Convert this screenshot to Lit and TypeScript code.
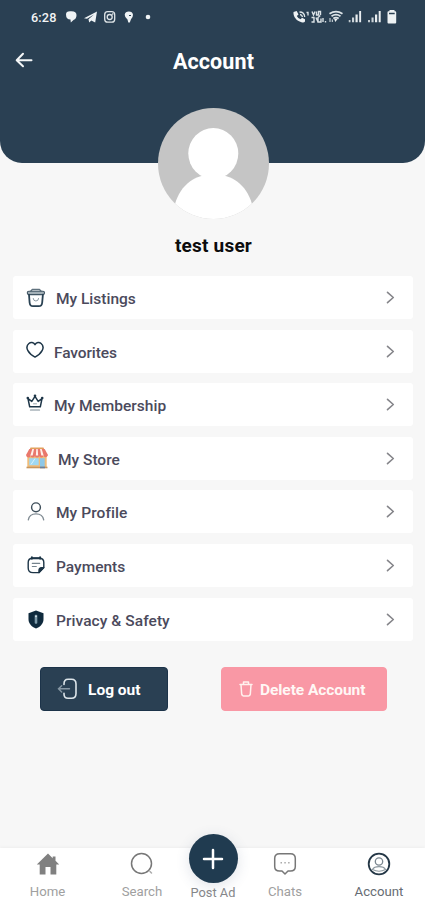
import { LitElement, html, svg, css } from "lit";
import { customElement } from "lit/decorators.js";

const NAVY = "#2a4053";
const INK = "#1d3547";

const icons = {
  listings: svg`<svg width="20" height="20" viewBox="0 0 20 20" fill="none" stroke="#2a4253" stroke-width="1.3" stroke-linecap="round" stroke-linejoin="round">
    <path d="M4.500 3.500 6.300 1.500H13.500L15.300 3.500" stroke="#60727e"/><rect x="1.300" y="3.200" width="17.200" height="3.400" rx="1.500" fill="#a3b0b7" stroke="#405563" stroke-width="1.100"/>
    <path d="M3 6.600 3.600 14.500Q3.900 18.200 7 18.200H12.800Q15.900 18.200 16.200 14.500L16.900 6.600" stroke-width="1.800"/>
    <path d="M7.200 10.500Q7.400 13 9.900 13T12.600 10.500" stroke="#8c9aa3" stroke-width="1"/></svg>`,
  heart: svg`<svg width="18" height="18" viewBox="0 0 18 18" fill="none" stroke="${INK}" stroke-width="1.500" stroke-linejoin="round">
    <path d="M9 3.700C7.500 1.200 4.700 1 2.900 2.500C.8 4.300.5 7.200 1.900 9.700C3.400 12.500 7 15.100 9 16.100C11 15.100 14.600 12.500 16.100 9.700C17.500 7.200 17.200 4.300 15.100 2.500C13.300 1 10.500 1.200 9 3.700Z"/></svg>`,
  crown: svg`<svg width="18" height="18" viewBox="0 0 18 18" fill="none" stroke="${INK}" stroke-width="1.500" stroke-linejoin="round" stroke-linecap="round">
    <path d="M3.700 12.800 2 4.700 5.800 7.400 9 2.400 12.200 7.400 16 4.700 14.300 12.800Z"/><path d="M4.500 16H13.500" stroke="#7d8b95" stroke-width="1.200"/>
    <path d="M7.500 9.800H10.500" stroke="#9aa5ad" stroke-width="1"/><g fill="${INK}" stroke="none"><circle cx="1.800" cy="4" r="1.300"/><circle cx="9" cy="1.700" r="1.300"/><circle cx="16.200" cy="4" r="1.300"/></g></svg>`,
  store: svg`<svg width="22" height="22" viewBox="0 0 22 22">
    <rect x="4" y=".5" width="14" height="4" rx="1" fill="#e2a05c"/><rect x="1.300" y="8" width="19.400" height="12.500" fill="#f0bd7b"/>
    <path d="M3.300 2H18.700L21.700 7.500V9H.300V7.500Z" fill="#e9786c"/>
    <path d="M6.300 2H8L6.600 9H4.200ZM10.300 2H11.700L12.200 9H9.800ZM14 2H15.700L17.800 9H15.400Z" fill="#fff1ea"/>
    <path d="M.300 8.500a2.150 2.100 0 0 0 4.300 0 2.150 2.100 0 0 0 4.300 0 2.150 2.100 0 0 0 4.300 0 2.150 2.100 0 0 0 4.300 0 2.150 2.100 0 0 0 4.200 0Z" fill="#e9786c"/>
    <rect x="3.200" y="11.200" width="9.500" height="7" fill="#9fd8f2"/><rect x="14" y="11.200" width="4.700" height="9" fill="#8ec8e8"/>
    <path d="M5 17.500 9 11.500" stroke="#d9f2fc"/><path d="M.5 20.500H21.500" stroke="#c9965e" stroke-width="1.600"/><path d="M14 20.500H19" stroke="#6b7f9c" stroke-width="1.600"/></svg>`,
  profile: svg`<svg width="18" height="19" viewBox="0 0 18 19" fill="none" stroke-linecap="round">
    <circle cx="9" cy="5.300" r="4.400" stroke="#3d4d59" stroke-width="1.400"/><path d="M1.300 17.800C2 13.800 5 11.800 9 11.800S16 13.800 16.700 17.800" stroke="#7f8a92" stroke-width="1.300"/></svg>`,
  payments: svg`<svg width="18" height="18" viewBox="0 0 18 18" fill="none" stroke="${INK}" stroke-width="1.400" stroke-linecap="round" stroke-linejoin="round">
    <path d="M12 16.600H6Q1.200 16.600 1.200 12V6.500Q1.200 2.200 5.500 2.200H12.500Q16.800 2.200 16.800 6.500V11.500Z"/><path d="M12 16.600V14.500Q12 11.600 14.500 11.600H16.800Z" fill="${INK}"/>
    <path d="M4.900 1.200V2.800M13.100 1.200V2.800M5 2.200H13" stroke-width="1.900"/><path d="M5.300 7.400H12.700M5.300 10.500H9.300" stroke="#75838d" stroke-width="1.100"/></svg>`,
  shield: svg`<svg width="16" height="19" viewBox="0 0 16 19"><path d="M8 .5 15.500 3.300V9C15.500 13.500 12.500 16.700 8 18.500C3.500 16.700.5 13.500.5 9V3.300Z" fill="#0f2a3d"/>
    <rect x="6.700" y="4.800" width="2.600" height="9" rx="1" fill="#7d9aa9"/><circle cx="8" cy="6.300" r=".9" fill="#dbe5ea"/></svg>`,
};

const rows = [
  { icon: icons.listings, label: "My Listings", cls: "listings" },
  { icon: icons.heart, label: "Favorites", cls: "favorites" },
  { icon: icons.crown, label: "My Membership", cls: "membership" },
  { icon: icons.store, label: "My Store", cls: "store" },
  { icon: icons.profile, label: "My Profile", cls: "profile" },
  { icon: icons.payments, label: "Payments", cls: "payments" },
  { icon: icons.shield, label: "Privacy & Safety", cls: "privacy" },
];

const signal = svg`<svg width="13" height="12" viewBox="0 0 13 12" fill="#e8edf0"><rect y="9.500" width="2" height="2.500" opacity=".8"/><rect x="3.500" y="7" width="2.100" height="5" opacity=".85"/><rect x="7" y="4" width="2.200" height="8"/><rect x="10.700" y=".5" width="2" height="11.500"/></svg>`;

@customElement("app-root")
export class AppRoot extends LitElement {
  static styles = css`
    :host { display: flex; flex-direction: column; height: 900px; width: 425px; background: #f7f7f7; font-family: Roboto, "Liberation Sans", sans-serif; overflow: hidden; }
    * { box-sizing: border-box; }
    svg { display: block; flex: none; }
    .header { height: 163px; background: #2a4053; border-radius: 0 0 22px 22px; flex: none; color: #fff; }
    .status { height: 34px; display: flex; align-items: center; padding: 0 28px 0 31px; justify-content: space-between; }
    .left, .right { display: flex; align-items: center; }
    .time { font-size: 12.700px; font-weight: 500; line-height: 16px; width: 34px; letter-spacing: .15px; color: #f3f5f6; padding-top: 1px; }
    .title { display: grid; grid-template-columns: 61px 1fr 59px; align-items: center; height: 56px; }
    .title svg { margin-left: 15px; margin-top: -4px; }
    h1 { margin: 0; text-align: center; font-size: 21.500px; font-weight: 700; line-height: 26px; letter-spacing: .1px; }
    .avatar { margin: -55px 0 0 158px; width: 111px; height: 111px; flex: none; }
    h2 { margin: 14px 0 0 2px; text-align: center; font-size: 19px; line-height: 25px; font-weight: 700; color: #0c0c0d; letter-spacing: .2px; flex: none; }
    .list { display: flex; flex-direction: column; gap: 10.600px; margin: 18px 12px 0 13px; }
    .row { height: 43px; background: #fff; border-radius: 3px; display: flex; align-items: center; padding: 0 18px 0 13px; color: #4b4a5c; }
    .label { flex: 1; font-size: 15.500px; line-height: 20px; font-weight: 500; padding-top: 3px; }
    .icon { width: 30px; }
    .favorites .icon, .membership .icon { width: 28px; padding-bottom: 3px; }
    .favorites .label { letter-spacing: -.1px; }
    .profile .label, .privacy .label { letter-spacing: .07px; }
    .store .icon { width: 32px; }
    .profile .icon, .payments .icon { padding-left: 1px; }
    .privacy .icon { padding-left: 2px; }
    .actions { display: flex; justify-content: space-between; padding: 0 38px 0 40px; margin-top: 26px; }
    .btn { height: 44px; border-radius: 4px; display: flex; align-items: center; color: #fff; font-weight: 700; font-size: 15.500px; border: 1px solid #1c3349; }
    .btn span { padding-top: 3px; }
    .logout { background: #2a4053; width: 128px; padding-left: 16px; gap: 10px; }
    .delete { background: #f998a5; border-color: #f998a5; width: 166px; padding-left: 17px; gap: 7px; color: #fff7f5; letter-spacing: -.07px; }
    .nav { margin-top: auto; height: 52.500px; background: #fff; box-shadow: 0 -1px 3px rgba(0, 0, 0, .04); display: grid; grid-template-columns: 95px 94px 48px 96px 92px; flex: none; }
    .tab { display: flex; flex-direction: column; align-items: center; color: #a0a0a0; font-size: 13.200px; line-height: 16px; padding-top: 4.500px; }
    .tab svg { margin-bottom: 8px; }
    .tab.active { color: #666c73; }
    .post { margin-top: -13.500px; padding-top: 0; color: #858689; white-space: nowrap; font-size: 12.800px; }
    .plus { width: 49px; height: 49px; border-radius: 50%; background: #203b50; display: grid; place-items: center; flex: none; box-shadow: 0 3px 14px rgba(60, 80, 120, .16); margin-bottom: 1.500px; }
    .tab .plus svg { margin: 0; }
  `;

  render() {
    return html`
      <div class="header">
        <div class="status">
          <div class="left">
            <span class="time">6:28</span>
            <svg width="90" height="14" viewBox="65 10 90 14" fill="#eff3f5">
              <path d="M66 14.500Q66 11 70.500 11.200Q76.500 10.800 76.500 15Q76.500 19 73.500 20L70.800 22.500 70.500 19.500Q66 19.500 66 14.500Z"/>
              <path d="M84 18.200 97 11.500 95.200 22.500 91.300 20.500 89.200 22.500 88.500 19.200 94 14.500 87 18.800Z"/>
              <rect x="104.700" y="11.700" width="10" height="10.500" rx="3" fill="none" stroke="#dfe5e8" stroke-width="1.300"/><circle cx="109.700" cy="17" r="2.500" fill="none" stroke="#dfe5e8" stroke-width="1.300"/><circle cx="112.700" cy="14" r=".8"/>
              <path d="M124.700 14.800A4.200 3.900 0 0 1 133 14.800Q133 17.500 131 19.200L129.800 22.500H128.300L127.500 19.400Q124.700 17.500 124.700 14.800Z"/><path d="M129 15.500H131" stroke="${NAVY}" fill="none"/>
              <circle cx="148" cy="17" r="2.300"/>
            </svg>
          </div>
          <div class="right">
            <svg width="54" height="16" viewBox="292 9 54 16" fill="#eef2f4">
              <path d="M293.500 12 296.700 11 298.500 14.500 296.800 16Q298 18.700 300.700 19.300L302 17.700 305 19.300V21.500Q304 22.900 301.500 22.200C296.500 21 293 16.500 293.500 12Z"/>
              <path d="M299.500 12Q304.500 12 304.700 17M300 14.500Q302 14.700 302.500 17M306.500 12.500H308V15.500" fill="none" stroke="#dfe6e9" stroke-width="1.300"/>
              <path d="M312 11.500 313.500 15 315 11.500M316.500 11.500V15H318.500V11.500H320.500V15M311.500 17.500H314V22H311.500M316 17.500 318 22M320.300 15.500 318 17.500V22H321V18.500M323 18V22M325.500 21V22.500" fill="none" stroke="#dce3e7" stroke-width="1.400"/>
              <path d="M329.500 13.800Q336 9.500 342.500 13.800M331.500 16.200Q336 13 340.500 16.200M333.300 18.500Q336 16.500 338.700 18.500" fill="none" stroke="#dde4e8" stroke-width="1.700"/><path d="M334 18.500H338L335.300 22Z"/><path d="M330 18V22M332.300 19.500V22" stroke="#dde4e8"/>
            </svg>
            <svg width="51" height="16" viewBox="346 9 51 16" fill="#eef2f4">
              <svg x="348.500" y="10.500" width="13" height="12">${signal}</svg>
              <svg x="368" y="10.500" width="13" height="12">${signal}</svg>
              <path d="M389.500 10H394.500V11.200H395.200Q396.200 11.200 396.200 12.200V22.500Q396.200 23.500 395.200 23.500H388.500Q387.500 23.500 387.500 22.500V12.200Q387.500 11.200 388.500 11.200H389.500Z"/><path d="M389 13.500H394.700" stroke="${NAVY}" stroke-width="1.500"/>
            </svg>
          </div>
        </div>
        <div class="title">
          <svg width="18" height="16" viewBox="0 0 18 16" fill="none" stroke="#f4f6f7" stroke-width="2" stroke-linecap="round" stroke-linejoin="round"><path d="M16.500 8.200H2M8 1.800 1.700 8.200 8 14.300"/></svg>
          <h1>Account</h1>
        </div>
      </div>
      <svg class="avatar" viewBox="0 0 111 111">
        <defs><clipPath id="disc"><circle cx="55.500" cy="55.500" r="55.500"/></clipPath></defs>
        <g clip-path="url(#disc)"><rect width="111" height="111" fill="#c5c5c5"/><ellipse cx="55.300" cy="45.500" rx="25" ry="25.500" fill="#fff"/>
        <path d="M17 96C23 76 37 66.500 55.500 66.500S88 76 94 96L84 111H27Z" fill="#fff"/></g>
      </svg>
      <h2>test user</h2>
      <div class="list">
        ${rows.map(r => html`<div class="row ${r.cls}"><div class="icon">${r.icon}</div><div class="label">${r.label}</div>
          <svg width="9" height="13" viewBox="0 0 9 13" fill="none" stroke="#85858a" stroke-width="1.600" stroke-linecap="round" stroke-linejoin="round"><path d="M1.500 1.300 7.300 6.500 1.500 11.700"/></svg></div>`)}
      </div>
      <div class="actions">
        <div class="btn logout">
          <svg width="21" height="22" viewBox="0 0 21 22" fill="none" stroke="#dde5ea" stroke-width="1.600" stroke-linecap="round"><path d="M7 6.500V6Q7 1.300 11 1.300H14.500Q19 1.300 19 6V15.500Q19 20.300 14.500 20.300H11Q7 20.300 7 16V15.300"/><path d="M12.500 10.800H2M4.700 7.700 1.500 10.800 4.700 13.900" stroke="#8797a4" stroke-width="1.400"/></svg>
          <span>Log out</span>
        </div>
        <div class="btn delete">
          <svg width="14" height="16" viewBox="0 0 14 16" fill="none" stroke="#fff1ee" stroke-width="1.500" stroke-linecap="round" stroke-linejoin="round"><path d="M1 3.500H13M4.500 3.300V1H9.500V3.300M2 3.700 2.700 13.200Q2.900 15 4.500 15H9.500Q11.100 15 11.300 13.200L12 3.700"/></svg>
          <span>Delete Account</span>
        </div>
      </div>
      <div class="nav">
        <div class="tab"><svg width="24" height="24" viewBox="0 0 24 24" fill="#808080"><path d="M12 1.500 .8 12.500H3.700V22.500H9.500V15H14.500V22.500H20.300V12.500H23.200L19.500 8.800V4.500H16.700V6.200Z"/></svg>Home</div>
        <div class="tab"><svg width="24" height="24" viewBox="0 0 24 24" fill="none" stroke="#777" stroke-width="1.500" stroke-linecap="round"><circle cx="11.500" cy="11.500" r="10"/><path d="M20 19.500 21.500 21" stroke="#aaa"/></svg>Search</div>
        <div class="tab post"><div class="plus"><svg width="22" height="22" viewBox="0 0 22 22" stroke="#fff" stroke-width="2.500" stroke-linecap="round"><path d="M11 2V20M2 11H20"/></svg></div>Post Ad</div>
        <div class="tab"><svg width="24" height="24" viewBox="0 0 24 24" fill="none" stroke="#777" stroke-width="1.500" stroke-linejoin="round"><path d="M6.500 1.700H17.500Q22.300 1.700 22.300 6.500V14.500Q22.300 19 17.500 19H15L12 22 9 19H6.500Q1.700 19 1.700 14.500V6.500Q1.700 1.700 6.500 1.700Z"/><path d="M7.500 10.800H9M11.300 10.800H12.800M15.100 10.800H16.600" stroke="#aaa"/></svg>Chats</div>
        <div class="tab active"><svg width="24" height="24" viewBox="0 0 24 24" fill="none"><circle cx="12" cy="12" r="10.300" stroke="#243746" stroke-width="1.800"/><circle cx="12" cy="9.500" r="3.700" stroke="#7a868f" stroke-width="1.300"/><path d="M5.500 17.500Q7 14.700 12 14.700T18.500 17.500Q12 21 5.500 17.500Z" stroke="#8b969d" stroke-width="1.200"/></svg>Account</div>
      </div>`;
  }
}
